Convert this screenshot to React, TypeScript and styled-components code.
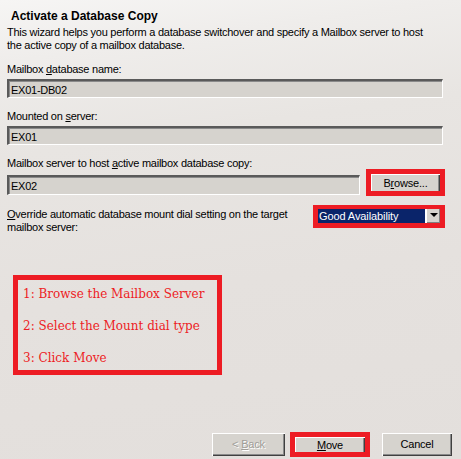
import React from "react";
import styled, { createGlobalStyle } from "styled-components";

const Global = createGlobalStyle`
  html, body { margin: 0; padding: 0; background: #e4e0dd; }
  body { font-family: "Liberation Sans", Arial, sans-serif; }
`;

const RED = "#ed1c24";

const Page = styled.div`
  position: relative;
  width: 461px;
  height: 459px;
  box-sizing: border-box;
  overflow: hidden;
  display: flex;
  flex-direction: column;
  font-family: "Liberation Sans", Arial, sans-serif;
  font-size: 11px;
  line-height: 13px;
  letter-spacing: -0.25px;
  color: #000;
  background:
    linear-gradient(172deg, #f6f5f4 0%, #efedeb 12%, #e8e5e2 30%, #e5e1de 60%, #e3dfdc 100%);
`;

const Title = styled.div`
  margin: 9px 0 0 11px;
  font-size: 12px;
  line-height: 14px;
  font-weight: bold;
  letter-spacing: 0;
`;

const Description = styled.div`
  margin: 3px 0 0 7px;
  width: 430px;
`;

const Field = styled.div<{ $gap: number }>`
  margin: ${(p) => p.$gap}px 18px 0 7px;
  display: flex;
  flex-direction: column;
`;

const Label = styled.div``;

const U = styled.span`
  text-decoration: underline;
  text-underline-offset: 1px;
`;

const TextBox = styled.div<{ $top?: number }>`
  margin-top: ${(p) => p.$top ?? 3}px;
  height: 20px;
  box-sizing: border-box;
  background: #d6d3ce;
  border-top: 2px solid #5a5a5a;
  border-left: 2px solid #5a5a5a;
  border-bottom: 1px solid #ffffff;
  border-right: 1px solid #ffffff;
  box-shadow: inset 1px 1px 0 #8a8a8a;
  padding: 2px 0 0 2px;
  font-size: 11px;
  line-height: 14px;
  flex: 1;
`;

const Row = styled.div`
  display: flex;
  align-items: flex-start;
`;

const RedFrame = styled.div<{ $w: number; $h: number }>`
  width: ${(p) => p.$w}px;
  height: ${(p) => p.$h}px;
  box-sizing: border-box;
  border: 5px solid ${RED};
  display: flex;
  overflow: hidden;
`;

const BrowseWrap = styled.div`
  margin: -1px -2px 0 6px;
`;

const Button = styled.button<{ $w: number; $h?: number; $disabled?: boolean }>`
  flex: none;
  width: ${(p) => p.$w}px;
  height: ${(p) => p.$h ?? 23}px;
  box-sizing: border-box;
  background: #d6d3ce;
  border: none;
  box-shadow: inset 1px 1px 0 #ffffff, inset -1px -1px 0 #404040,
    inset -2px -2px 0 #8a8a8a;
  font-family: "Liberation Sans", Arial, sans-serif;
  font-size: 11px;
  letter-spacing: -0.2px;
  line-height: 13px;
  padding: 0;
  color: ${(p) => (p.$disabled ? "#a09d98" : "#000")};
  text-shadow: ${(p) => (p.$disabled ? "1px 1px 0 #ffffff" : "none")};
`;

const OverrideRow = styled.div`
  margin: 12px 16px 0 7px;
  display: flex;
  justify-content: space-between;
  align-items: flex-start;
`;

const OverrideLabel = styled.div`
  width: 300px;
`;

const DropFrame = styled.div`
  margin-top: -3px;
  border: 5px solid ${RED};
  border-top-width: 4px;
  display: flex;
`;

const Select = styled.div`
  width: 122px;
  height: 14px;
  display: flex;
  background: #0a246a;
  color: #ffffff;
  font-size: 11px;
  line-height: 14px;
  letter-spacing: -0.1px;
`;

const SelectText = styled.div`
  flex: 1;
  padding-left: 1px;
  border-right: 2px solid #ffffff;
`;

const Arrow = styled.div`
  width: 13px;
  background: #d6d3ce;
  display: flex;
  align-items: center;
  justify-content: center;
  box-shadow: inset -1px -1px 0 #808080;
`;

const Triangle = styled.div`
  width: 0;
  height: 0;
  border-left: 4px solid transparent;
  border-right: 4px solid transparent;
  border-top: 4px solid #000;
  margin-top: -3px;
`;

const Steps = styled.div`
  margin: 41px 0 0 13px;
  width: 209px;
  height: 100px;
  box-sizing: border-box;
  border: 5px solid ${RED};
  padding: 4px 0 0 5px;
  display: flex;
  flex-direction: column;
  gap: 12px;
`;

const Step = styled.div`
  font-family: "DejaVu Serif", "Liberation Serif", serif;
  font-size: 12px;
  line-height: 20px;
  letter-spacing: 0;
  color: ${RED};
  white-space: nowrap;
`;

const Footer = styled.div`
  margin-top: auto;
  margin-bottom: 2px;
  display: flex;
  align-items: center;
  padding-left: 212px;
`;

const MoveWrap = styled.div`
  margin-left: 5px;
`;

const CancelWrap = styled.div`
  margin-left: 12px;
`;

export default function App() {
  return (
    <Page>
      <Global />
      <Title>Activate a Database Copy</Title>
      <Description>
        This wizard helps you perform a database switchover and specify a Mailbox server to host
        the active copy of a mailbox database.
      </Description>

      <Field $gap={11}>
        <Label>
          Mailbox <U>d</U>atabase name:
        </Label>
        <TextBox>EX01-DB02</TextBox>
      </Field>

      <Field $gap={12}>
        <Label>
          Mounted on <U>s</U>erver:
        </Label>
        <TextBox>EX01</TextBox>
      </Field>

      <Field $gap={12}>
        <Label>
          Mailbox server to host <U>a</U>ctive mailbox database copy:
        </Label>
        <Row>
          <TextBox $top={5}>EX02</TextBox>
          <BrowseWrap>
            <RedFrame $w={79} $h={27}>
              <Button $w={69} $h={19}>
                B<U>r</U>owse...
              </Button>
            </RedFrame>
          </BrowseWrap>
        </Row>
      </Field>

      <OverrideRow>
        <OverrideLabel>
          <U>O</U>verride automatic database mount dial setting on the target mailbox server:
        </OverrideLabel>
        <DropFrame>
          <Select>
            <SelectText>Good Availability</SelectText>
            <Arrow>
              <Triangle />
            </Arrow>
          </Select>
        </DropFrame>
      </OverrideRow>

      <Steps>
        <Step>1: Browse the Mailbox Server</Step>
        <Step>2: Select the Mount dial type</Step>
        <Step>3: Click Move</Step>
      </Steps>

      <Footer>
        <Button $w={73} $disabled>
          &lt; <U>B</U>ack
        </Button>
        <MoveWrap>
          <RedFrame $w={80} $h={25}>
            <Button $w={70} $h={17}>
              <U>M</U>ove
            </Button>
          </RedFrame>
        </MoveWrap>
        <CancelWrap>
          <Button $w={70}>Cancel</Button>
        </CancelWrap>
      </Footer>
    </Page>
  );
}
